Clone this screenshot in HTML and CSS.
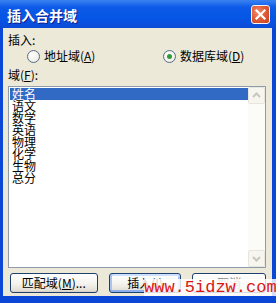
FILE: index.html
```html
<!DOCTYPE html>
<html lang="zh">
<head>
<meta charset="utf-8">
<link rel="stylesheet" href="styles.css">
</head>
<body>
<div class="window">
  <div class="titlebar">
    <span class="title">插入合并域</span>
    <span class="close">
      <svg width="17" height="17" viewBox="0 0 17 17"><path d="M4.5 4.5 L12.5 12.5 M12.5 4.5 L4.5 12.5" stroke="#fff" stroke-width="2.2" stroke-linecap="square"/></svg>
    </span>
  </div>
  <div class="client">
    <div class="label">插入:</div>
    <div class="radios">
      <div class="opt"><span class="radio"></span><span>地址域(<u>A</u>)</span></div>
      <div class="opt"><span class="radio checked"></span><span>数据库域(<u>D</u>)</span></div>
    </div>
    <div class="label fields">域(<u>F</u>):</div>
    <div class="listbox">
      <ul class="items">
        <li class="sel">姓名</li>
        <li>语文</li>
        <li>数学</li>
        <li>英语</li>
        <li>物理</li>
        <li>化学</li>
        <li>生物</li>
        <li>总分</li>
      </ul>
      <div class="scrollbar">
        <div class="sb-btn"><svg width="15" height="15" viewBox="0 0 15 15"><path d="M4 9 L7.5 5.5 L11 9" fill="none" stroke="#c9c7ba" stroke-width="2"/></svg></div>
        <div class="sb-track"></div>
        <div class="sb-btn"><svg width="15" height="15" viewBox="0 0 15 15"><path d="M4 6 L7.5 9.5 L11 6" fill="none" stroke="#c9c7ba" stroke-width="2"/></svg></div>
      </div>
    </div>
    <div class="buttons">
      <div class="btn b1">匹配域(<u>M</u>)...</div>
      <div class="btn b2 default">插入(<u>I</u>)</div>
      <div class="btn b3">取消</div>
    </div>
  </div>
  <div class="watermark">www.5idzw.com</div>
</div>
</body>
</html>
```
FILE: styles.css
```css
html, body {
  margin: 0;
  padding: 0;
}
body {
  width: 276px;
  height: 303px;
  overflow: hidden;
  font-family: "Noto Sans CJK SC", "Noto Sans", sans-serif;
  font-size: 12px;
  color: #000;
}
.window {
  position: relative;
  width: 276px;
  height: 303px;
  display: flex;
  flex-direction: column;
  background: #0b47d6;
  padding-bottom: 7px;
  box-sizing: border-box;
}
.titlebar {
  height: 28px;
  flex: none;
  display: flex;
  align-items: flex-start;
  justify-content: space-between;
  background: linear-gradient(#3a80ee 0%, #2a74f0 10%, #0c5ae6 25%, #0556e6 65%, #0a4ad6 100%);
  padding: 0 6px 0 7px;
  box-sizing: border-box;
}
.title {
  color: #fff;
  font-weight: bold;
  font-size: 14px;
  line-height: 14px;
  margin-top: 8px;
  text-shadow: 1px 1px 0 #0a1f8c;
}
.close {
  margin-top: 5px;
  width: 19px;
  height: 19px;
  box-sizing: border-box;
  border: 1px solid #f4f4f4;
  border-radius: 3px;
  background: radial-gradient(circle at 35% 35%, #f08a6a 0%, #e05a35 50%, #c8401e 100%);
  display: flex;
  align-items: center;
  justify-content: center;
}
.close svg { display: block; }
.client {
  flex: 1;
  margin: 0 4px 0 3px;
  background: #ece9d8;
  padding: 5px 6px 0 5px;
  display: flex;
  flex-direction: column;
}
.label {
  height: 14px;
  line-height: 14px;
}
.fields {
  margin-top: 5px;
}
.radios {
  margin-top: 2px;
  height: 14px;
  display: grid;
  grid-template-columns: 136px auto;
  padding-left: 19px;
}
.opt {
  display: flex;
  align-items: center;
  gap: 4px;
  line-height: 14px;
}
.radio {
  width: 13px;
  height: 13px;
  box-sizing: border-box;
  border-radius: 50%;
  border: 1px solid #5a6e88;
  background: radial-gradient(circle at 40% 40%, #ffffff 0%, #f2f1ea 60%, #dcd9cc 100%);
  display: flex;
  align-items: center;
  justify-content: center;
}
.radio.checked::after {
  content: "";
  width: 5px;
  height: 5px;
  border-radius: 50%;
  background: #2f9a3a;
}
u {
  text-decoration: underline;
  text-underline-offset: 1px;
}
.listbox {
  margin-top: 4px;
  height: 182px;
  box-sizing: border-box;
  border: 1px solid #8d9bab;
  background: #fff;
  display: flex;
}
.items {
  flex: 1;
  list-style: none;
  margin: 0;
  padding: 1px 0 0 1px;
}
.items li {
  height: 12px;
  line-height: 12px;
  padding-left: 2px;
}
.items li.sel {
  background: #316ac5;
  color: #fff;
}
.scrollbar {
  width: 17px;
  display: flex;
  flex-direction: column;
  background: #fbfbf8;
}
.sb-btn {
  height: 17px;
  box-sizing: border-box;
  border: 1px solid #e8e6dc;
  border-radius: 2px;
  background: #f6f5ef;
  display: flex;
  align-items: center;
  justify-content: center;
}
.sb-track {
  flex: 1;
}
.buttons {
  margin-top: 5px;
  height: 20px;
  display: flex;
  gap: 11px;
  padding-left: 2px;
}
.btn {
  height: 20px;
  box-sizing: border-box;
  border: 1px solid #1f3f6e;
  border-radius: 3px;
  background: linear-gradient(#ffffff 0%, #f5f4ef 50%, #e4e1d6 90%, #d6d0c2 100%);
  line-height: 18px;
  text-align: center;
}
.b1 { width: 88px; }
.b2 { width: 73px; }
.b3 { width: 74px; color: #8e8e8e; }
.btn.default {
  box-shadow: inset 0 -2px 0 #8cb0ef, inset 2px 0 0 #a9c4f4, inset 0 2px 0 #cde0ff, inset -2px 0 0 #a9c4f4;
}
.watermark {
  position: absolute;
  left: 144px;
  top: 279px;
  width: 132px;
  height: 17px;
  background: rgba(255, 255, 255, 0.82);
  color: #dc1414;
  font-family: "Liberation Mono", monospace;
  font-size: 17px;
  line-height: 18px;
  white-space: nowrap;
  overflow: hidden;
}
```
